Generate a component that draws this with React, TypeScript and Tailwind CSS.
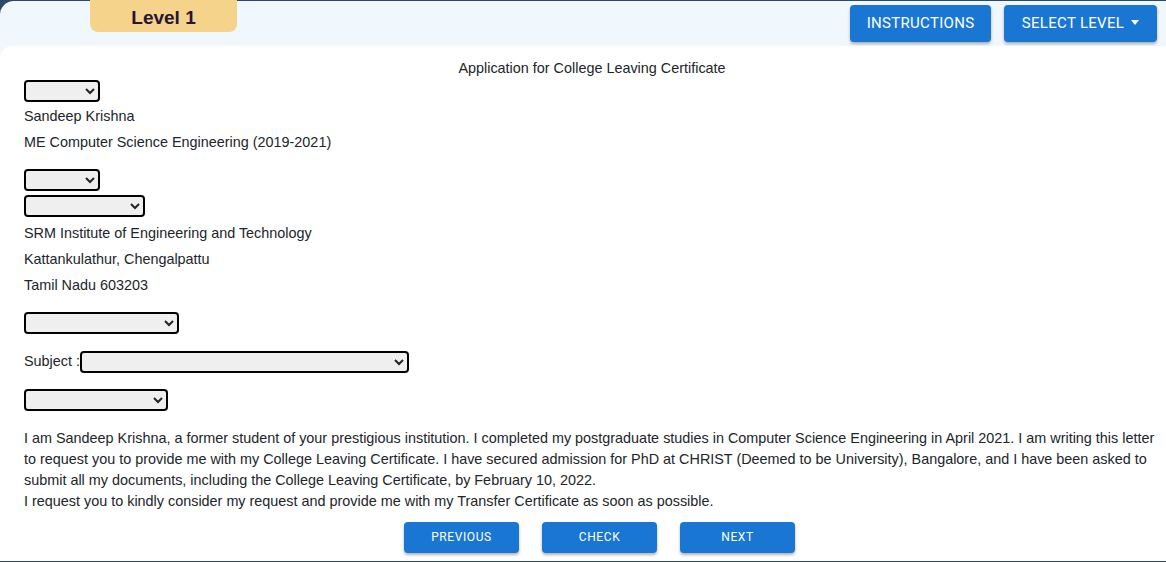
import React from 'react';

const Select: React.FC<{ w: string }> = ({ w }) => (
  <select className={`${w} h-[22px] rounded-[4px] border-2 border-black bg-[#efefef] text-[13px]`}>
    <option value=""></option>
  </select>
);

const App: React.FC = () => {
  return (
    <div className="h-[562px] w-[1166px] overflow-hidden bg-[#2b4a6b] pt-px pb-px font-['Liberation_Sans',Arial,sans-serif] text-[14.4px] text-[#212529]">
      <div className="flex h-full flex-col rounded-tl-[14px] bg-[#f1f8fd]">
        {/* Header */}
        <div className="flex h-[45px] shrink-0 items-start justify-between">
          <div className="ml-[90px] -mt-px flex h-[32px] w-[147px] items-center justify-center rounded-b-[8px] bg-[#f6d38b] pt-[4px] text-[19px] font-bold text-[#251634]">
            Level 1
          </div>
          <div className="mr-[9px] mt-[4px] flex gap-[13px] font-['Roboto',sans-serif]">
            <button className="h-[37px] w-[141px] rounded-[4px] bg-[#1976d2] text-[15px] tracking-[0.3px] text-white shadow-[0_2px_3px_rgba(0,0,0,0.3)]">
              INSTRUCTIONS
            </button>
            <button className="flex h-[37px] w-[153px] items-center justify-center gap-[7px] rounded-[4px] bg-[#1976d2] text-[15px] tracking-[0.3px] text-white shadow-[0_2px_3px_rgba(0,0,0,0.3)]">
              SELECT LEVEL
              <span className="mb-[2px] border-x-[4px] border-t-[5px] border-x-transparent border-t-white" />
            </button>
          </div>
        </div>

        {/* Card */}
        <div className="flex flex-1 flex-col rounded-tl-[12px] bg-white pl-[24px] pr-[6px]">
          <div className="mt-[12px] text-center leading-[20px]">Application for College Leaving Certificate</div>
          <div className="mt-[2px]">
            <Select w="w-[76px]" />
          </div>
          <div className="mt-px leading-[26px]">Sandeep Krishna</div>
          <div className="leading-[26px]">ME Computer Science Engineering (2019-2021)</div>
          <div className="mt-[14px] flex flex-col gap-[4px]">
            <Select w="w-[76px]" />
            <Select w="w-[121px]" />
          </div>
          <div className="mt-[3px] leading-[26px]">SRM Institute of Engineering and Technology</div>
          <div className="leading-[26px]">Kattankulathur, Chengalpattu</div>
          <div className="leading-[26px]">Tamil Nadu 603203</div>
          <div className="mt-[14px]">
            <Select w="w-[155px]" />
          </div>
          <div className="mt-[16px] flex items-center">
            <span className="pt-px">Subject :</span>
            <Select w="w-[329px]" />
          </div>
          <div className="mt-[16px]">
            <Select w="w-[144px]" />
          </div>
          <p className="mt-[17px] leading-[21px] text-[#212529]">
            I am Sandeep Krishna, a former student of your prestigious institution. I completed my postgraduate studies in Computer Science Engineering in April 2021. I am writing this letter to request you to provide me with my College Leaving Certificate. I have secured admission for PhD at CHRIST (Deemed to be University), Bangalore, and I have been asked to submit all my documents, including the College Leaving Certificate, by February 10, 2022.
            <br />
            I request you to kindly consider my request and provide me with my Transfer Certificate as soon as possible.
          </p>
          <div className="mt-[10px] flex justify-center gap-[23px] pl-[15px] font-['Roboto',sans-serif]">
            {['PREVIOUS', 'CHECK', 'NEXT'].map((label) => (
              <button
                key={label}
                className="h-[31px] w-[115px] rounded-[4px] bg-[#1976d2] text-[12px] tracking-[0.6px] text-white shadow-[0_2px_3px_rgba(0,0,0,0.3)]"
              >
                {label}
              </button>
            ))}
          </div>
        </div>
      </div>
    </div>
  );
};

export default App;
